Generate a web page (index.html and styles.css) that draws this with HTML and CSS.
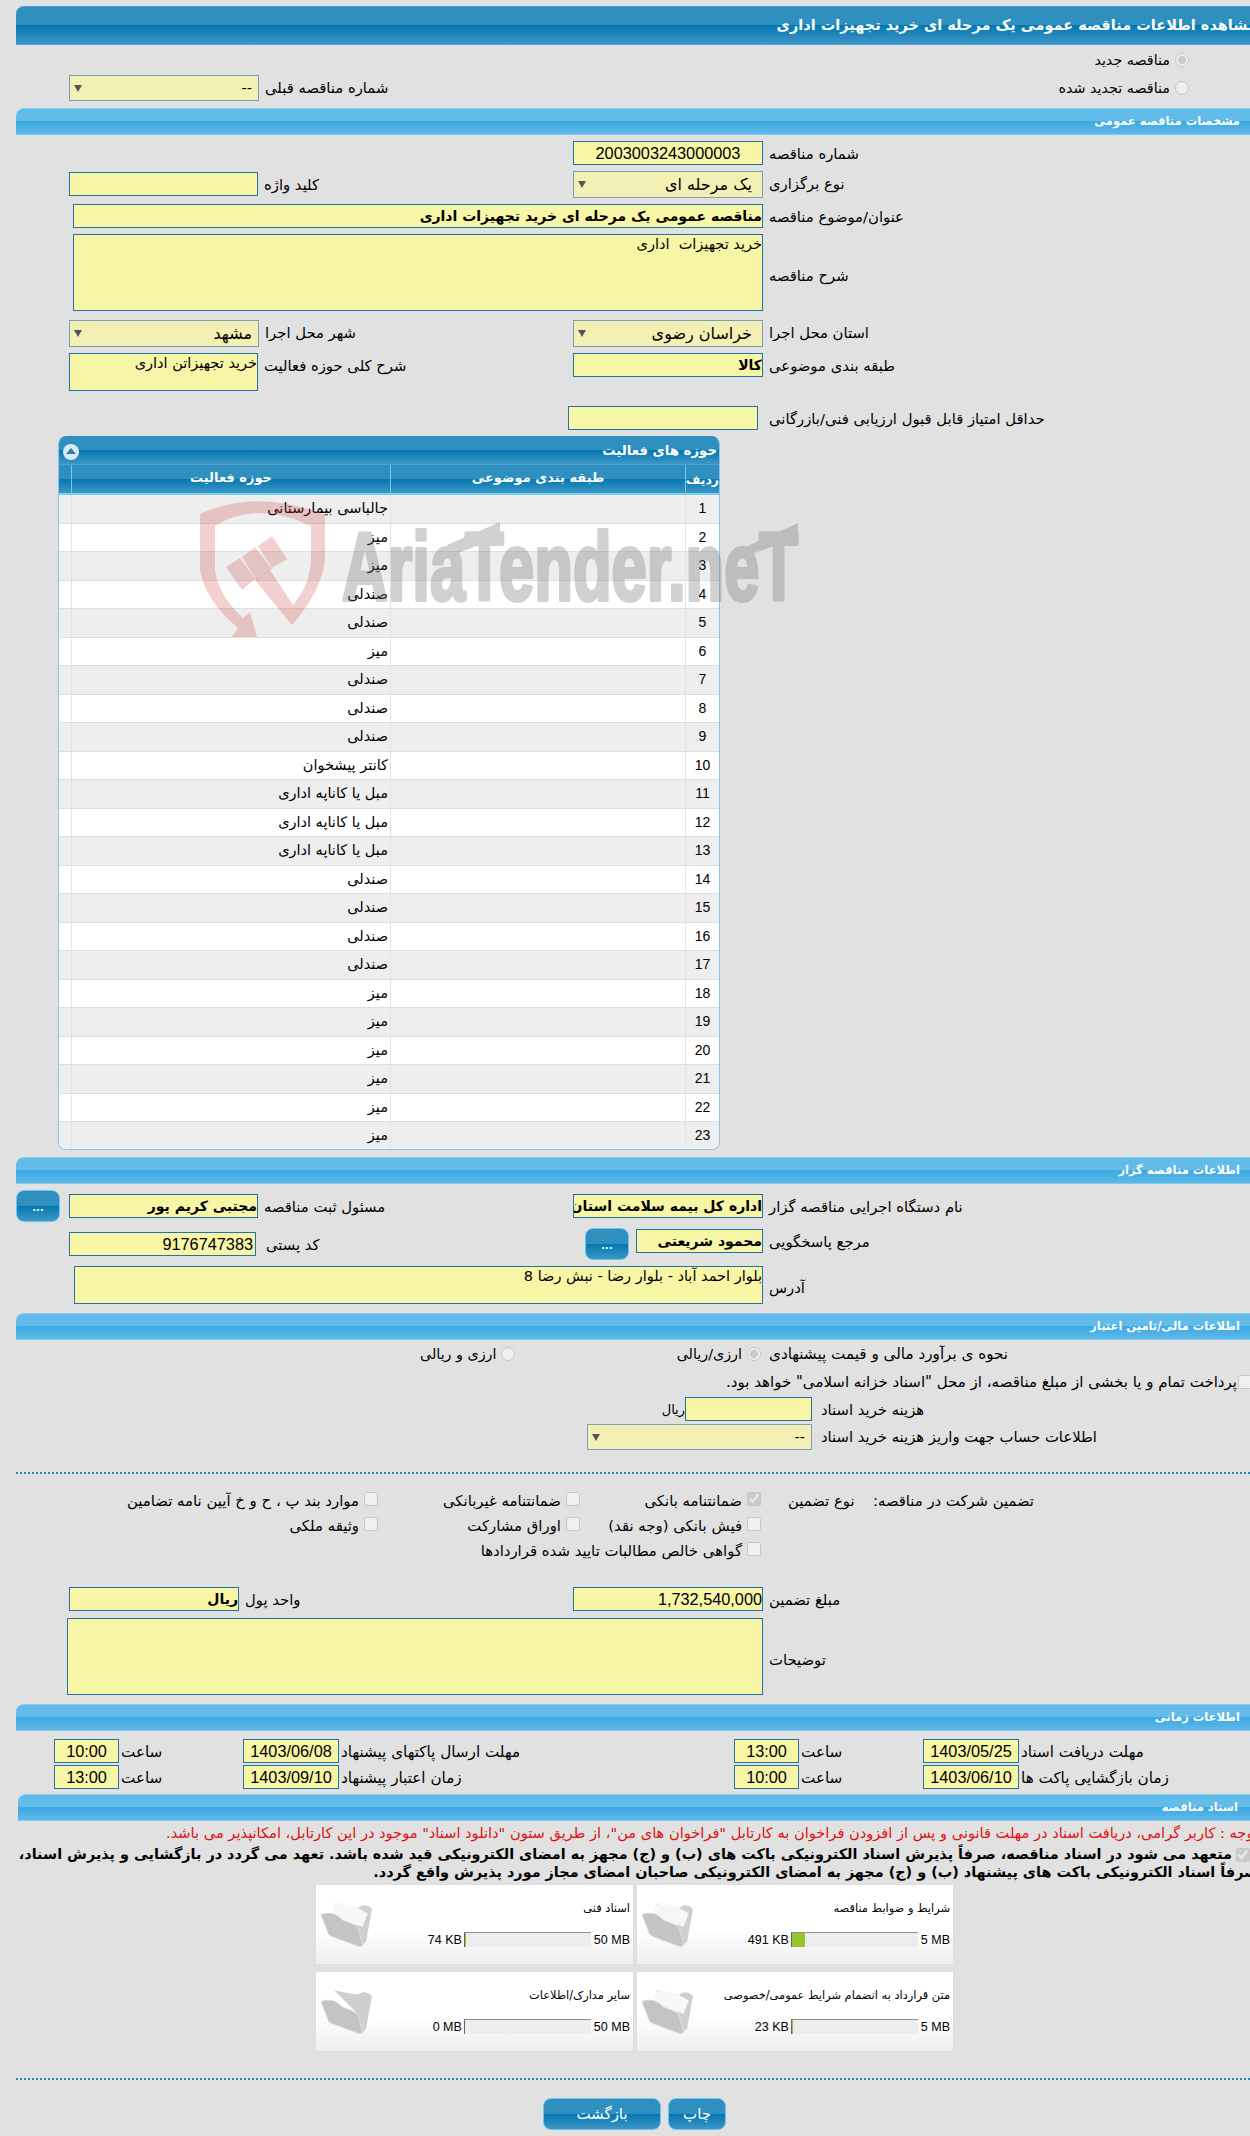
FILE: index.html
```html
<!DOCTYPE html>
<html lang="fa">
<head>
<meta charset="utf-8">
<title>مشاهده اطلاعات مناقصه</title>
<link rel="stylesheet" href="styles.css">
</head>
<body>
<div class="page">
<h1 class="title"><span>مشاهده اطلاعات مناقصه عمومی یک مرحله ای خرید تجهیزات اداری</span></h1>

<div class="row h28">
  <div class="half-r off-right"><label class="opt">مناقصه جدید<input type="radio" checked disabled></label></div>
</div>
<div class="row h35">
  <div class="half-l"><div class="select w190 mt2"><i class="arrow"></i><span>--</span></div><span class="lab mt2">شماره مناقصه قبلی</span></div>
  <div class="half-r off-right"><label class="opt">مناقصه تجدید شده<input type="radio" disabled></label></div>
</div>

<h2 class="section">مشخصات مناقصه عمومی</h2>
<div class="row h30 mt6">
  <div class="half-l"></div>
  <div class="half-r"><div class="field w190 center">2003003243000003</div><span class="lab">شماره مناقصه</span></div>
</div>
<div class="row h33">
  <div class="half-l"><div class="field w189 mt1"></div><span class="lab mt1">کلید واژه</span></div>
  <div class="half-r"><div class="select w190 tall"><i class="arrow"></i><span class="big pad-r">یک مرحله ای</span></div><span class="lab">نوع برگزاری</span></div>
</div>
<div class="row h30 wide-row">
  <div class="field w690 strong">مناقصه عمومی یک مرحله ای خرید تجهیزات اداری</div><span class="lab">عنوان/موضوع مناقصه</span>
</div>
<div class="row h86 wide-row">
  <div class="field w690 area a77">خرید تجهیزات&nbsp; اداری</div><span class="lab lab-mid">شرح مناقصه</span>
</div>
<div class="row h33">
  <div class="half-l"><div class="select w190 tall"><i class="arrow"></i><span class="big">مشهد</span></div><span class="lab">شهر محل اجرا</span></div>
  <div class="half-r"><div class="select w190 tall"><i class="arrow"></i><span class="big pad-r">خراسان رضوی</span></div><span class="lab">استان محل اجرا</span></div>
</div>
<div class="row h53">
  <div class="half-l"><div class="field w189 area a38">خرید تجهیزاتن اداری</div><span class="lab">شرح کلی حوزه فعالیت</span></div>
  <div class="half-r"><div class="field w190 strong">کالا</div><span class="lab">طبقه بندی موضوعی</span></div>
</div>
<div class="row h30">
  <div class="half-l half-narrow"></div>
  <div class="half-r"><div class="field w190"></div><span class="lab lab-gap">حداقل امتیاز قابل قبول ارزیابی فنی/بازرگانی</span></div>
</div>

<section class="panel">
  <div class="panel-head"><button class="toggle" type="button"><i></i></button><span>حوزه های فعالیت</span></div>
  <div class="grid grid-head"><div></div><div>حوزه فعالیت</div><div>طبقه بندی موضوعی</div><div>ردیف</div></div>
  <div class="grid"><div></div><div>جالباسی بیمارستانی</div><div></div><div>1</div></div>
  <div class="grid"><div></div><div>میز</div><div></div><div>2</div></div>
  <div class="grid"><div></div><div>میز</div><div></div><div>3</div></div>
  <div class="grid"><div></div><div>صندلی</div><div></div><div>4</div></div>
  <div class="grid"><div></div><div>صندلی</div><div></div><div>5</div></div>
  <div class="grid"><div></div><div>میز</div><div></div><div>6</div></div>
  <div class="grid"><div></div><div>صندلی</div><div></div><div>7</div></div>
  <div class="grid"><div></div><div>صندلی</div><div></div><div>8</div></div>
  <div class="grid"><div></div><div>صندلی</div><div></div><div>9</div></div>
  <div class="grid"><div></div><div>کانتر پیشخوان</div><div></div><div>10</div></div>
  <div class="grid"><div></div><div>مبل یا کاناپه اداری</div><div></div><div>11</div></div>
  <div class="grid"><div></div><div>مبل یا کاناپه اداری</div><div></div><div>12</div></div>
  <div class="grid"><div></div><div>مبل یا کاناپه اداری</div><div></div><div>13</div></div>
  <div class="grid"><div></div><div>صندلی</div><div></div><div>14</div></div>
  <div class="grid"><div></div><div>صندلی</div><div></div><div>15</div></div>
  <div class="grid"><div></div><div>صندلی</div><div></div><div>16</div></div>
  <div class="grid"><div></div><div>صندلی</div><div></div><div>17</div></div>
  <div class="grid"><div></div><div>میز</div><div></div><div>18</div></div>
  <div class="grid"><div></div><div>میز</div><div></div><div>19</div></div>
  <div class="grid"><div></div><div>میز</div><div></div><div>20</div></div>
  <div class="grid"><div></div><div>میز</div><div></div><div>21</div></div>
  <div class="grid"><div></div><div>میز</div><div></div><div>22</div></div>
  <div class="grid"><div></div><div>میز</div><div></div><div>23</div></div>
</section>

<svg class="watermark" viewBox="200 500 600 137" aria-hidden="true">
  <path class="wm-red" d="M200 514Q257 488 325 515L325 560Q322 590 292 625L255 580L270 570L293 605Q310 585 311 560L311 526Q257 500 215 526L215 570Q218 595 243 618L250 612L257 637L232 637L238 628Q205 600 200 570Z"/>
  <path class="wm-red" d="M226 567L240 558L255 579L242 590ZM242 557L255 547L272 569L256 580ZM258 546L272 536L287 559L272 568Z"/>
  <g class="wm-gray">
    <text class="wm-text" x="342" y="600" textLength="456" lengthAdjust="spacingAndGlyphs">AriaTender.neT</text>
    <path d="M447 545L500 522L500 537L453 555ZM743 548L798 523L798 537L749 555Z"/>
  </g>
</svg>

<h2 class="section sec-top">اطلاعات مناقصه گزار</h2>
<div class="row h38 mt6">
  <div class="half-l half-btn"><button class="dots" type="button">...</button><div class="field w189 strong mt4">مجتبی کریم پور</div><span class="lab mt4">مسئول ثبت مناقصه</span></div>
  <div class="half-r"><div class="field w190 strong mt4 clip">اداره کل بیمه سلامت استان خراسان رضوی</div><span class="lab mt4">نام دستگاه اجرایی مناقصه گزار</span></div>
</div>
<div class="row h38">
  <div class="half-l"><div class="field w187 mt4 num-r">9176747383</div><span class="lab mt4 lab-post">کد پستی</span></div>
  <div class="half-r half-back"><button class="dots" type="button">...</button><div class="field w127 strong mt1">محمود شریعتی</div><span class="lab mt1">مرجع پاسخگویی</span></div>
</div>
<div class="row h47 wide-row addr">
  <div class="field w689 area a38">بلوار احمد آباد - بلوار رضا - نبش رضا 8</div><span class="lab lab-addr">آدرس</span>
</div>

<h2 class="section">اطلاعات مالی/تامین اعتبار</h2>
<div class="row h28">
  <div class="half-l half-opt"><label class="opt">ارزی و ریالی<input type="radio" disabled></label></div>
  <div class="half-r half-opt2"><label class="opt">ارزی/ریالی<input type="radio" checked disabled></label><span class="lab">نحوه ی برآورد مالی و قیمت پیشنهادی</span></div>
</div>
<div class="row h29 pay">
  <label class="opt"><span class="rtl">پرداخت تمام و یا بخشی از مبلغ مناقصه، از محل "اسناد خزانه اسلامی" خواهد بود.</span><input type="checkbox" disabled></label>
</div>
<div class="row h27 cost">
  <span class="lab rial">ریال</span><div class="field w127"></div><span class="lab lab-cost">هزینه خرید اسناد</span>
</div>
<div class="row h48 cost cost2">
  <div class="select w225 tall2"><i class="arrow"></i><span>--</span></div><span class="lab lab-cost">اطلاعات حساب جهت واریز هزینه خرید اسناد</span>
</div>
<hr class="dotted">

<div class="checks first">
  <label class="opt c3">موارد بند پ ، ح و خ آیین نامه تضامین<input type="checkbox" disabled></label>
  <label class="opt c2">ضمانتنامه غیربانکی<input type="checkbox" disabled></label>
  <label class="opt c1">ضمانتنامه بانکی<input type="checkbox" checked disabled></label>
  <span class="lab c4">نوع تضمین</span>
  <span class="lab c5">تضمین شرکت در مناقصه:</span>
</div>
<div class="checks">
  <label class="opt c3">وثیقه ملکی<input type="checkbox" disabled></label>
  <label class="opt c2">اوراق مشارکت<input type="checkbox" disabled></label>
  <label class="opt c1"><span class="rtl">فیش بانکی (وجه نقد)</span><input type="checkbox" disabled></label>
</div>
<div class="checks">
  <label class="opt c6">گواهی خالص مطالبات تایید شده قراردادها<input type="checkbox" disabled></label>
</div>

<div class="row h31 mt24">
  <div class="half-l"><div class="field w170 strong">ریال</div><span class="lab">واحد پول</span></div>
  <div class="half-r"><div class="field w190 num-e">1,732,540,000</div><span class="lab">مبلغ تضمین</span></div>
</div>
<div class="row h86 wide-row desc">
  <div class="field w696 area a77"></div><span class="lab lab-mid">توضیحات</span>
</div>

<h2 class="section">اطلاعات زمانی</h2>
<div class="times mt8 h26">
  <div class="field time">10:00</div><span class="lab">ساعت</span>
  <div class="field date">1403/06/08</div><span class="lab">مهلت ارسال پاکتهای پیشنهاد</span>
  <div class="field time">13:00</div><span class="lab">ساعت</span>
  <div class="field date">1403/05/25</div><span class="lab">مهلت دریافت اسناد</span>
</div>
<div class="times h29">
  <div class="field time">13:00</div><span class="lab">ساعت</span>
  <div class="field date">1403/09/10</div><span class="lab">زمان اعتبار پیشنهاد</span>
  <div class="field time">10:00</div><span class="lab">ساعت</span>
  <div class="field date">1403/06/10</div><span class="lab">زمان بازگشایی پاکت ها</span>
</div>

<h2 class="section sec-docs">اسناد مناقصه</h2>
<p class="note">توجه : کاربر گرامی، دریافت اسناد در مهلت قانونی و پس از افزودن فراخوان به کارتابل "فراخوان های من"، از طریق ستون "دانلود اسناد" موجود در این کارتابل، امکانپذیر می باشد.</p>
<p class="oath"><input type="checkbox" checked disabled>متعهد می شود در اسناد مناقصه، صرفاً پذیرش اسناد الکترونیکی باکت های (ب) و (ج) مجهز به امضای الکترونیکی قید شده باشد. تعهد می گردد در بازگشایی و پذیرش اسناد،<br>صرفاً اسناد الکترونیکی باکت های پیشنهاد (ب) و (ج) مجهز به امضای الکترونیکی صاحبان امضای مجاز مورد پذیرش واقع گردد.</p>

<div class="cards">
  <article class="card">
    <svg class="folder" viewBox="0 30 180 170"><path class="f-back" d="M55 55L125 68L140 60Q160 60 168 72L150 170L140 180L125 125Z"/><path class="f-paper" d="M50 75L65 52L120 65L155 85L140 125L80 105Z"/><path class="f-front" d="M15 88Q45 78 65 92L80 105Q110 115 125 125L140 180Q135 187 125 183L50 155Q35 150 35 140Z"/></svg>
    <div class="info"><div class="name">اسناد فنی</div><div class="usage"><span>74 KB</span><div class="bar"><b style="width:1px"></b></div><span>50 MB</span></div></div>
  </article>
  <article class="card">
    <svg class="folder" viewBox="0 30 180 170"><path class="f-back" d="M55 55L125 68L140 60Q160 60 168 72L150 170L140 180L125 125Z"/><path class="f-paper" d="M50 75L65 52L120 65L155 85L140 125L80 105Z"/><path class="f-front" d="M15 88Q45 78 65 92L80 105Q110 115 125 125L140 180Q135 187 125 183L50 155Q35 150 35 140Z"/></svg>
    <div class="info"><div class="name">شرایط و ضوابط مناقصه</div><div class="usage"><span>491 KB</span><div class="bar"><b style="width:13px"></b></div><span>5 MB</span></div></div>
  </article>
  <article class="card">
    <svg class="folder" viewBox="0 30 180 170"><path class="f-back" d="M55 55L125 68L140 60Q160 60 168 72L150 170L140 180L125 125Z"/><path class="f-front" d="M15 88Q45 78 65 92L80 105Q110 115 125 125L140 180Q135 187 125 183L50 155Q35 150 35 140Z"/></svg>
    <div class="info"><div class="name">سایر مدارک/اطلاعات</div><div class="usage"><span>0 MB</span><div class="bar"><b style="width:0"></b></div><span>50 MB</span></div></div>
  </article>
  <article class="card">
    <svg class="folder" viewBox="0 30 180 170"><path class="f-back" d="M55 55L125 68L140 60Q160 60 168 72L150 170L140 180L125 125Z"/><path class="f-paper" d="M50 75L65 52L120 65L155 85L140 125L80 105Z"/><path class="f-front" d="M15 88Q45 78 65 92L80 105Q110 115 125 125L140 180Q135 187 125 183L50 155Q35 150 35 140Z"/></svg>
    <div class="info"><div class="name">متن قرارداد به انضمام شرایط عمومی/خصوصی</div><div class="usage"><span>23 KB</span><div class="bar"><b style="width:1px"></b></div><span>5 MB</span></div></div>
  </article>
</div>

<hr class="dotted foot">
<div class="actions">
  <button class="act back" type="button">بازگشت</button>
  <button class="act print" type="button">چاپ</button>
</div>
</div>
</body>
</html>
```
FILE: styles.css
```css
* { box-sizing: border-box; }
html, body { margin: 0; padding: 0; }
body {
  background: #e1e1e1;
  color: #000;
  font-family: "DejaVu Sans", "Liberation Sans", sans-serif;
  font-size: 12px;
  overflow-x: hidden;
}
.page { position: relative; width: 1250px; height: 2136px; overflow: hidden; }
.rtl { direction: rtl; unicode-bidi: isolate; }

.title {
  margin: 6px 0 0 16px;
  height: 39px;
  border-radius: 8px 0 0 0;
  border-top: 1px solid #4a9fd8;
  border-bottom: 1px solid #4ba7dc;
  background: linear-gradient(#2f90bf 0, #2f90bf 50%, #0377b1 50%, #3d97c6 100%);
  color: #fff;
  font-size: 14.5px;
  font-weight: bold;
  line-height: 36px;
  direction: rtl;
  white-space: nowrap;
  overflow: hidden;
}
.title span { display: inline-block; margin-right: -7px; }

.section {
  margin: 0 0 0 16px;
  height: 27px;
  border-radius: 8px 0 0 0;
  border-top: 1px solid #7fcdf0;
  border-bottom: 1px solid #7fcdf0;
  background: linear-gradient(#63bbe9 0, #63bbe9 48%, #3aa9e2 48%, #60b8e8 100%);
  color: #fff;
  font-size: 11.5px;
  font-weight: bold;
  line-height: 25px;
  padding-right: 10px;
  direction: rtl;
  white-space: nowrap;
}
.sec-top { margin-top: 7px; }
.sec-docs { margin-left: 18px; padding-right: 12px; }

.row { display: flex; align-items: flex-start; }
.h26 { height: 26px; } .h27 { height: 27px; } .h28 { height: 28px; } .h29 { height: 29px; }
.h30 { height: 30px; } .h31 { height: 31px; } .h33 { height: 33px; } .h35 { height: 35px; }
.h38 { height: 38px; } .h47 { height: 47px; } .h48 { height: 48px; } .h53 { height: 53px; }
.h86 { height: 86px; }
.mt1 { margin-top: 1px; } .mt2 { margin-top: 2px; } .mt4 { margin-top: 4px; }
.mt6 { margin-top: 6px; } .mt8 { margin-top: 8px; } .mt24 { margin-top: 24px; }

.half-l { width: 573px; padding-left: 69px; display: flex; align-items: flex-start; }
.half-r { flex: 1; display: flex; align-items: flex-start; }
.half-btn { padding-left: 16px; }
.half-btn .dots { margin-right: 9px; }
.half-back { margin-left: 12px; }
.half-back .dots { margin-right: 7px; }
.half-opt { padding-left: 420px; padding-top: 4px; }
.half-opt2 { padding-top: 4px; }
.half-opt2 .opt { width: 188px; justify-content: flex-end; }
.half-opt2 .lab { margin-left: 8px; line-height: 20px; font-size: 15.2px; }
.off-right { justify-content: flex-end; padding-right: 61px; padding-top: 5px; }

.lab {
  direction: rtl;
  white-space: nowrap;
  margin-left: 6px;
  font-size: 14.8px;
  line-height: 26px;
}
.lab-mid { margin-top: 29px; }
.lab-addr { margin-top: 9px; }
.lab-gap { margin-left: 11px; }
.lab-post { margin-left: 10px; }

.opt {
  display: inline-flex;
  align-items: center;
  direction: ltr;
  font-size: 14.3px;
  line-height: 20px;
  white-space: nowrap;
  unicode-bidi: isolate;
}
.opt input { margin: 0 0 0 5px; width: 14px; height: 14px; flex: none; }

.field, .select {
  direction: rtl;
  white-space: nowrap;
  overflow: hidden;
  height: 24px;
  line-height: 23px;
  font-size: 14.5px;
  flex: none;
}
.field {
  background: #f7f5a6;
  border: 1px solid #2473a6;
}
.select {
  position: relative;
  background: #f3f0b6;
  border: 1px solid #7c9fb4;
  height: 26px;
  line-height: 25px;
  padding-right: 6px;
}
.select.tall { height: 27px; line-height: 26px; }
.select.tall2 { height: 26px; }
.arrow {
  position: absolute;
  left: 4px;
  top: 9px;
  width: 0;
  height: 0;
  border-left: 4px solid transparent;
  border-right: 4px solid transparent;
  border-top: 7px solid #555;
}
.big { font-size: 16px; }
.pad-r { padding-right: 4px; }

.w127 { width: 127px; } .w170 { width: 170px; } .w187 { width: 187px; } .w189 { width: 189px; }
.w190 { width: 190px; } .w225 { width: 225px; } .w689 { width: 689px; } .w690 { width: 690px; }
.w696 { width: 696px; }
.center { text-align: center; font-family: "Liberation Sans", sans-serif; font-size: 16.3px; }
.strong { font-weight: bold; font-size: 14px; }
.num-r { font-family: "Liberation Sans", sans-serif; font-size: 16.3px; padding-right: 2px; }
.num-e { font-family: "Liberation Sans", sans-serif; font-size: 16.3px; direction: ltr; text-align: right; }
.area { white-space: normal; line-height: 18px; }
.a77 { height: 77px; }
.a38 { height: 38px; }
.clip { text-overflow: clip; }

.wide-row { padding-left: 73px; }
.addr { padding-left: 74px; }
.desc { padding-left: 67px; }
.half-narrow { width: 568px; }

.panel {
  margin-left: 58px;
  width: 662px;
  height: 714px;
  border: 1px solid #8cc4e4;
  border-top: 0;
  border-radius: 8px;
  overflow: hidden;
  background: #fff;
}
.panel-head {
  position: relative;
  height: 29px;
  margin: 0 -1px;
  background: linear-gradient(#2f90bf 0, #2f90bf 50%, #0377b1 50%, #3d97c6 100%);
  color: #fff;
  font-size: 13.3px;
  font-weight: bold;
  line-height: 30px;
  direction: rtl;
  padding-right: 3px;
  border-bottom: 1px solid #4aa0cf;
}
.toggle {
  position: absolute;
  left: 5px;
  top: 8px;
  width: 16px;
  height: 16px;
  padding: 0;
  border: 0;
  border-radius: 50%;
  background: #dbe9f4;
}
.toggle i {
  position: absolute;
  left: 3px;
  top: 4px;
  width: 0;
  height: 0;
  border-left: 5px solid transparent;
  border-right: 5px solid transparent;
  border-bottom: 6px solid #2a7fa8;
}
.grid {
  display: grid;
  grid-template-columns: 12px 319px 295px 34px;
  height: 28.5px;
  background: #fff;
  border-bottom: 1px solid #dedede;
  font-size: 14.5px;
  line-height: 27px;
  direction: ltr;
}
.grid:nth-child(odd) { background: #eee; }
.grid > div { direction: rtl; border-left: 1px solid #e4e4e4; white-space: nowrap; }
.grid > div:nth-child(1) { border-left: 0; }
.grid > div:nth-child(2) { padding-right: 2px; }
.grid > div:nth-child(4) { text-align: center; font-family: "Liberation Sans", sans-serif; font-size: 14px; }
.grid-head {
  height: 30px;
  background: linear-gradient(#2f90bf 0, #2f90bf 50%, #0377b1 50%, #3d97c6 100%) !important;
  border-bottom: 2px solid #7ad3f2;
  color: #fff;
  font-weight: bold;
  font-size: 13px;
  line-height: 25px;
}
.grid-head > div { border-left: 1px solid #7cc6e6; text-align: center; }
.grid-head > div:nth-child(2) { padding-right: 0; }
.grid-head > div:nth-child(4) { font-family: "DejaVu Sans", sans-serif; font-size: 12.5px; line-height: 30px; }

.watermark {
  position: absolute;
  left: 200px;
  top: 500px;
  width: 600px;
  height: 137px;
  pointer-events: none;
}
.wm-red { fill: #c83a3a; opacity: .24; }
.wm-gray { opacity: .33; fill: #777; }
.wm-text {
  font-family: "Liberation Sans", sans-serif;
  font-weight: bold;
  font-size: 96px;
  stroke: #777;
  stroke-width: 4;
  stroke-linejoin: round;
}

.dots {
  flex: none;
  width: 44px;
  height: 32px;
  padding: 4px 0 0;
  border: 1px solid #6cc6ee;
  border-radius: 8px;
  background: linear-gradient(#2f90bf 0, #2f90bf 50%, #0377b1 50%, #3d97c6 100%);
  color: #fff;
  font: bold 10px/20px "DejaVu Sans", sans-serif;
}

.pay { justify-content: flex-end; padding-top: 4px; font-size: 15px; }
.pay .opt { font-size: 15px; }
.pay .opt input { margin-left: 1px; margin-right: -2px; }
.cost { padding-left: 662px; }
.rial { margin: 0; width: 23px; font-size: 13px; }
.lab-cost { margin-left: 9px; }
.cost2 { padding-left: 587px; }

.dotted { margin: 0 0 0 16px; border: 0; border-top: 2px dotted #2a85bc; height: 0; }
.foot { margin-top: 27px; }

.checks { display: flex; align-items: center; height: 25px; }
.first { margin-top: 14px; }
.checks .opt { justify-content: flex-end; font-size: 14.9px; }
.checks .opt input { margin-top: -4px; }
.c3 { width: 378px; }
.c2 { width: 202px; }
.c1 { width: 181px; }
.c4 { margin-left: 27px; width: 80px; text-align: left; }
.c5 { margin-left: 5px; }
.c6 { width: 761px; }

.times {
  display: grid;
  grid-template-columns: 65px 124px 96px 395px 65px 124px 96px auto;
  padding-left: 54px;
  align-items: start;
}
.times .lab { margin-left: 2px; justify-self: start; font-size: 15.2px; }
.time, .date { width: 100%; text-align: center; font-family: "Liberation Sans", sans-serif; font-size: 16.3px; }

.note {
  margin: 0 -8px 0 0;
  height: 24px;
  direction: rtl;
  white-space: nowrap;
  color: #e01010;
  font-size: 14.6px;
  line-height: 24px;
}
.oath {
  margin: 0 -8px 0 0;
  height: 40px;
  direction: rtl;
  white-space: nowrap;
  font-weight: bold;
  font-size: 14.4px;
  line-height: 18px;
}
.oath input { margin: 0 8px 0 4px; width: 14px; height: 14px; vertical-align: middle; }

.cards {
  display: grid;
  grid-template-columns: 317px 316px;
  grid-auto-rows: 79px;
  column-gap: 4px;
  row-gap: 8px;
  margin-left: 316px;
  width: 637px;
}
.card {
  display: flex;
  align-items: flex-start;
  background: linear-gradient(#fff 0, #fff 55%, #eeeeee 100%);
  box-shadow: 0 0 2px #d8d8d8;
}
.folder { flex: none; width: 60px; height: 57px; margin-top: 10px; filter: blur(.5px); }
.f-back { fill: #cfcfcf; }
.f-paper { fill: #f7f7f7; }
.f-front { fill: #c4c4c4; stroke: #dcdcdc; stroke-width: 3; }
.info { flex: 1; min-width: 0; direction: rtl; padding-right: 3px; }
.name { font-size: 11.4px; line-height: 18px; margin-top: 14px; white-space: nowrap; text-align: right; }
.usage {
  display: flex;
  direction: ltr;
  justify-content: flex-end;
  align-items: center;
  margin-top: 15px;
  font-family: "Liberation Sans", sans-serif;
  font-size: 12.5px;
}
.usage span { white-space: nowrap; }
.bar {
  width: 127px;
  height: 15px;
  margin: 0 3px 0 2px;
  background: #ededed;
  border-top: 1px solid #8f8f8f;
  border-left: 1px solid #666;
}
.bar b { display: block; height: 100%; background: #96c62e; }

.actions { display: flex; gap: 7px; padding-left: 543px; margin-top: 18px; }
.act {
  height: 32px;
  padding: 0;
  border: 1px solid #6cc6ee;
  border-radius: 8px;
  background: linear-gradient(#2f90bf 0, #2f90bf 50%, #0377b1 50%, #3d97c6 100%);
  color: #fff;
  font: 15px/28px "DejaVu Sans", sans-serif;
}
.back { width: 118px; }
.print { width: 58px; }
```
